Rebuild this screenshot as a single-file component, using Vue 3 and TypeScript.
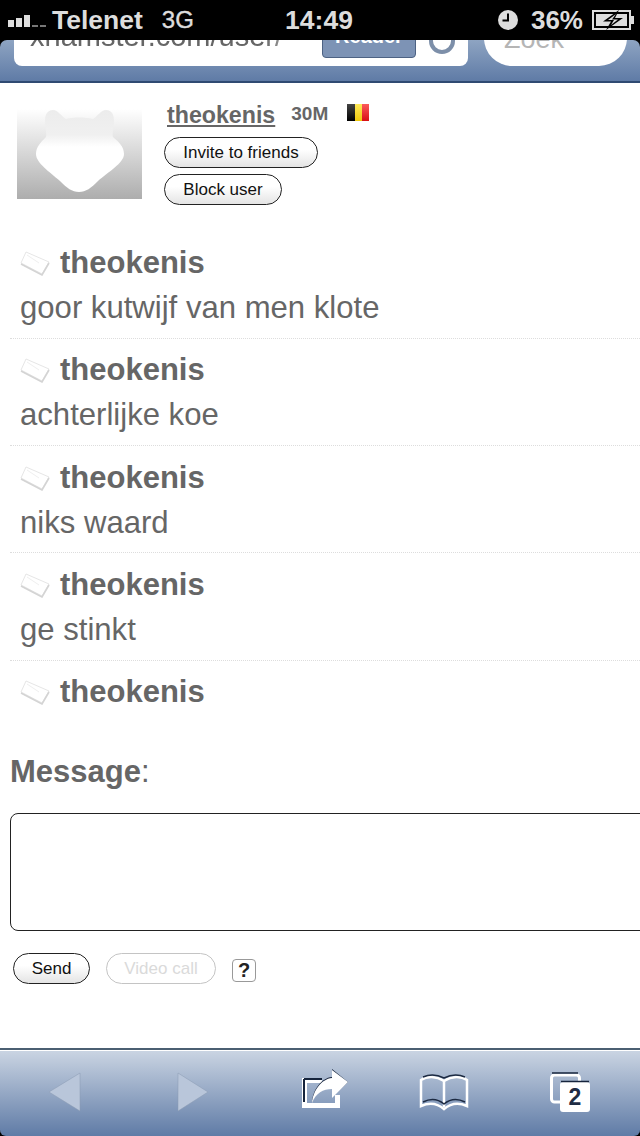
<script setup lang="ts">
// messages shown in the thread
const messages = [
  { user: 'theokenis', text: 'goor kutwijf van men klote' },
  { user: 'theokenis', text: 'achterlijke koe' },
  { user: 'theokenis', text: 'niks waard' },
  { user: 'theokenis', text: 'ge stinkt' },
  { user: 'theokenis', text: '' },
]
</script>

<template>
  <div class="phone">
    <div class="status">
      <div class="status-left">
        <span class="signal"><i class="b1"></i><i class="b2"></i><i class="b3"></i><i class="b4"></i><i class="b5"></i></span>
        <span class="carrier">Telenet</span>
        <span class="net">3G</span>
      </div>
      <div class="time">14:49</div>
      <div class="status-right">
        <svg class="clock" width="20" height="20" viewBox="0 0 20 20">
          <circle cx="10" cy="10" r="10" fill="#ddd" />
          <path d="M10 3.5V10.5H4.5" fill="none" stroke="#000" stroke-width="2" />
        </svg>
        <span class="percent">36%</span>
        <svg class="battery" width="42" height="20" viewBox="0 0 42 20">
          <rect x="1" y="1" width="37" height="18" fill="none" stroke="#ddd" stroke-width="2" />
          <rect x="4" y="4" width="31" height="12" fill="#ddd" />
          <rect x="39" y="6" width="3" height="8" fill="#ddd" />
          <path d="M27 0 11 11.5H19L14 20 31 8H23Z" fill="#000" />
          <path d="M24 4 16 10H22L19 15 26 9.5H20Z" fill="#ddd" />
        </svg>
      </div>
    </div>

    <div class="nav">
      <div class="url">
        <span class="url-text">xhamster.com/user/</span>
        <span class="reader">Reader</span>
        <span class="reload"></span>
      </div>
      <div class="search">Zoek</div>
    </div>

    <div class="content">
      <div class="profile">
        <svg class="avatar" width="125" height="90" viewBox="0 0 125 90">
          <defs>
            <linearGradient id="avatarBg" x1="0" y1="0" x2="0" y2="1">
              <stop offset="0" stop-color="#fff" />
              <stop offset="1" stop-color="#adadad" />
            </linearGradient>
            <linearGradient id="earFade" x1="0" y1="0" x2="0" y2="1">
              <stop offset="0" stop-color="#ececec" />
              <stop offset="0.3" stop-color="#f0f0f0" />
              <stop offset="0.45" stop-color="#fff" />
            </linearGradient>
          </defs>
          <rect width="125" height="90" fill="url(#avatarBg)" />
          <path
            d="M36 1C30 1 28 6 28 12 28 19 30 24 29 28 24 33 19 38 19 45 19 54 33 63 43 72 50 79 55 83 62 83 69 83 74 79 81 72 91 63 107 54 107 45 107 38 102 33 96 28 95 24 97 19 97 12 97 6 95 1 89 1 84 1 81 7 76 10 68 8 56 8 49 10 44 7 41 1 36 1Z"
            fill="url(#earFade)"
          />
        </svg>
        <div class="profile-info">
          <div class="profile-head">
            <a class="profile-name">theokenis</a>
            <span class="age">30M</span>
            <span class="flag"><i class="black"></i><i class="yellow"></i><i class="red"></i></span>
          </div>
          <button class="pill invite">Invite to friends</button>
          <button class="pill block">Block user</button>
        </div>
      </div>

      <div class="thread">
        <div v-for="(m, i) in messages" :key="i" class="msg">
          <div class="msg-head">
            <svg class="env" width="30" height="26" viewBox="0 0 30 26">
              <path d="M1 13 6 2 29 12 22 24Z" fill="#fff" stroke="#e6e6e6" stroke-width="1" stroke-linejoin="round" />
              <path d="M1 14 22 25 29 13" fill="none" stroke="#d4d4d4" stroke-width="1.6" />
              <path d="M7 5 19 13" fill="none" stroke="#efefef" stroke-width="1" />
            </svg>
            <span class="msg-user">{{ m.user }}</span>
          </div>
          <div v-if="m.text" class="msg-text">{{ m.text }}</div>
        </div>
      </div>

      <div class="composer">
        <div class="label"><b>Message</b>:</div>
        <div class="box"></div>
        <div class="actions">
          <button class="pill send">Send</button>
          <button class="pill video">Video call</button>
          <span class="help">?</span>
        </div>
      </div>
    </div>

    <div class="toolbar">
      <svg class="tb-icon" width="640" height="86" viewBox="0 0 640 86">
        <path d="M80 23V61L49 42Z" fill="#b9c6da" stroke="#8a9ab2" stroke-width="0.5" />
        <path d="M178 23V61L208 42Z" fill="#b9c6da" stroke="#8a9ab2" stroke-width="0.5" />

        <path d="M302 28H322V33H307V53H335V45H340V58H302Z" fill="#fff" />
        <path d="M304 29H322M304 29V52" fill="none" stroke="#16243c" stroke-width="2" />
        <path d="M332 19 348 32 332 47V38C323 38 316 42 312 52 313 40 321 28 332 27Z" fill="#16243c" />
        <path d="M332 20 348 32 332 48V39C323 39 316 43 312 53 313 41 321 29 332 28Z" fill="#fff" />

        <path d="M444 31C436 26 427 26 421 30V56C430 52 437 53 444 59 451 53 458 52 467 56V30C461 26 452 26 444 31Z" fill="none" stroke="#fff" stroke-width="2.5" />
        <path d="M444 31V57" stroke="#fff" stroke-width="2.5" />
        <path d="M423 52C431 48 438 49 444 54 450 49 457 48 465 52" fill="none" stroke="#1c2a42" stroke-width="1.5" />
        <path d="M423 27C430 24 438 25 444 28 450 25 458 24 465 27" fill="none" stroke="#1c2a42" stroke-width="1.5" />

        <rect x="551.5" y="25" width="28" height="27" rx="3" fill="none" stroke="#fff" stroke-width="3" />
        <path d="M552 23H578" stroke="#16243c" stroke-width="1.5" />
        <rect x="560" y="32" width="30" height="30" rx="3" fill="#fff" />
        <path d="M561 31.5H589" stroke="#16243c" stroke-width="1.5" />
        <text x="575" y="55" text-anchor="middle" class="tab-count">2</text>
      </svg>
    </div>
  </div>
</template>

<style scoped>
.phone {
  width: 640px;
  height: 1136px;
  display: flex;
  flex-direction: column;
  overflow: hidden;
  background: #000;
  font-family: "Liberation Sans", Arial, sans-serif;
  color: #666;
}

.status {
  height: 40px;
  flex: none;
  background: #000;
  color: #ddd;
  display: grid;
  grid-template-columns: 1fr auto 1fr;
  align-items: center;
  font-weight: bold;
  padding: 0 6px 0 8px;
  box-sizing: border-box;
}
.status-left,
.status-right {
  display: flex;
  align-items: center;
}
.status-right {
  justify-content: flex-end;
}
.signal {
  display: flex;
  align-items: flex-end;
  gap: 2px;
  height: 13px;
  margin-right: 6px;
}
.signal i {
  display: block;
  width: 6px;
  background: #ddd;
}
.signal .b1 { height: 7px; }
.signal .b2 { height: 9px; }
.signal .b3 { height: 12px; }
.signal .b4,
.signal .b5 { height: 2px; background: #777; }
.carrier {
  font-size: 26.5px;
}
.net {
  font-size: 24px;
  margin-left: 19px;
  font-weight: normal;
  -webkit-text-stroke: 0.4px #ddd;
}
.time {
  font-size: 26.5px;
  position: relative;
  left: -2px;
}
.clock {
  margin-right: 13px;
}
.percent {
  font-size: 26px;
  margin-right: 9px;
}

.nav {
  height: 43px;
  flex: none;
  box-sizing: border-box;
  background: linear-gradient(#8ea4c2, #5f7ba6);
  border-bottom: 2px solid #2f4a72;
  border-radius: 7px 7px 0 0;
  display: flex;
  align-items: flex-end;
  padding: 0 13px 15px 14px;
  gap: 16px;
  overflow: hidden;
}
.url {
  width: 454px;
  height: 60px;
  flex: none;
  background: #fff;
  border-radius: 0 0 8px 8px;
  display: flex;
  align-items: flex-end;
  padding: 0 14px 12px 16px;
  box-sizing: border-box;
  color: #666;
  font-size: 29px;
}
.url-text {
  flex: none;
  width: 292px;
  line-height: 36px;
  overflow: hidden;
  white-space: nowrap;
  -webkit-mask-image: linear-gradient(90deg, #000 80%, transparent);
  mask-image: linear-gradient(90deg, #000 80%, transparent);
}
.reader {
  flex: none;
  width: 94px;
  height: 40px;
  margin: 0 0 -4px 0;
  box-sizing: border-box;
  background: #7d93b5;
  border: 1px solid #4d6283;
  border-radius: 4px;
  color: #fff;
  font-size: 20px;
  font-weight: bold;
  text-align: center;
  line-height: 34px;
}
.reload {
  flex: none;
  width: 26px;
  height: 26px;
  margin: 0 0 0 13px;
  box-sizing: border-box;
  border: 4px solid #7d8fa9;
  border-radius: 50%;
}
.search {
  width: 143px;
  height: 60px;
  flex: none;
  box-sizing: border-box;
  background: #fff;
  border-radius: 0 0 28px 28px;
  color: #b5b5b5;
  font-size: 27px;
  padding: 15px 0 0 20px;
  line-height: 36px;
}

.content {
  flex: 1;
  min-height: 0;
  background: #fff;
}

.profile {
  display: flex;
  padding: 26px 0 0 17px;
  height: 148.5px;
  box-sizing: border-box;
}
.avatar {
  flex: none;
  display: block;
}
.profile-info {
  margin-left: 22px;
  margin-top: -8px;
  display: flex;
  flex-direction: column;
  align-items: flex-start;
}
.profile-head {
  display: flex;
  align-items: center;
  height: 29px;
  margin: 0 0 0 3px;
}
.profile-name {
  font-size: 23.2px;
  font-weight: bold;
  text-decoration: underline;
}
.age {
  font-size: 19px;
  font-weight: bold;
  margin-left: 16px;
  position: relative;
  top: -2px;
}
.flag {
  display: flex;
  width: 22px;
  height: 17px;
  margin-left: 19px;
  position: relative;
  top: -3px;
}
.flag i {
  flex: 1;
  display: block;
}
.flag .black { background: linear-gradient(#444, #000); }
.flag .yellow { background: linear-gradient(#ffe95a, #eec80c); }
.flag .red { background: linear-gradient(#fb5a5a, #d80f14); }

.pill {
  box-sizing: border-box;
  height: 31px;
  padding: 0;
  border: 1px solid #222;
  border-radius: 16px;
  background: linear-gradient(#fff 40%, #e4e4e4);
  color: #111;
  font-family: inherit;
  font-size: 17px;
}
.invite {
  width: 154px;
  margin-top: 7px;
}
.block {
  width: 118px;
  margin-top: 6px;
}

.thread {
  margin-top: 0;
  margin-left: 10px;
}
.msg {
  box-sizing: border-box;
  height: 107.3px;
  padding: 8.5px 0 0 10px;
  border-bottom: 1px dotted #ddd;
}
.msg:last-child {
  border-bottom: none;
  height: 91px;
}
.msg-head {
  display: flex;
  align-items: center;
  height: 46px;
}
.env {
  flex: none;
  margin: 0 10px 0 0;
}
.msg-user {
  font-size: 31px;
  font-weight: bold;
}
.msg-text {
  font-size: 31.1px;
  line-height: 44px;
}

.composer {
  padding-left: 10px;
}
.label {
  font-size: 31px;
  line-height: 40px;
}
.box {
  box-sizing: border-box;
  width: 660px;
  height: 118px;
  margin-top: 21px;
  border: 1.5px solid #222;
  border-radius: 8px;
  background: #fff;
}
.actions {
  display: flex;
  align-items: center;
  margin: 22px 0 0 3px;
}
.send {
  width: 77px;
  padding-top: 2px;
}
.video {
  width: 110px;
  margin-left: 16px;
  padding-top: 2px;
  border-color: #c4c4c4;
  background: #fff;
  color: #dadada;
}
.help {
  box-sizing: border-box;
  width: 24px;
  height: 23px;
  margin: 4px 0 0 16px;
  border: 1px solid #999;
  border-radius: 4px;
  color: #222;
  font-size: 20px;
  font-weight: bold;
  line-height: 21px;
  text-align: center;
}

.toolbar {
  height: 88px;
  flex: none;
  box-sizing: border-box;
  border-top: 2px solid #4b5f72;
  border-radius: 0 0 6px 6px;
  box-shadow: inset 0 1px 0 #fff;
  background: linear-gradient(#cbd5e3, #5f7ba6);
}
.tb-icon {
  display: block;
}
.tab-count {
  font-family: "Liberation Sans", Arial, sans-serif;
  font-size: 23px;
  font-weight: bold;
  fill: #1f2c44;
}
</style>
